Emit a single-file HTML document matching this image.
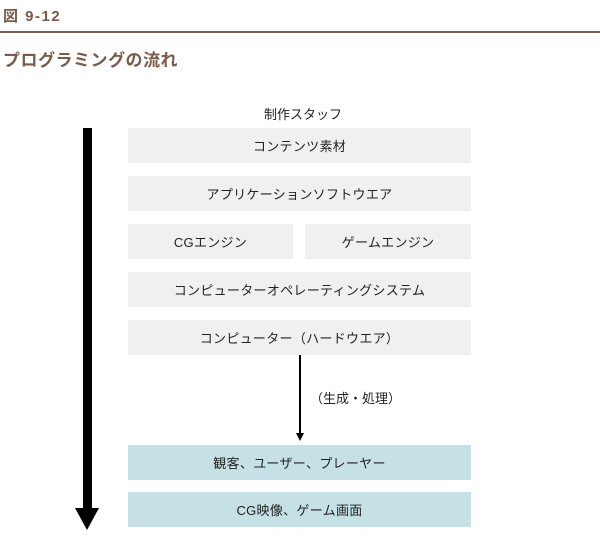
<!DOCTYPE html>
<html><head><meta charset="utf-8"><style>
body{margin:0;width:600px;height:543px;background:#fff;position:relative;overflow:hidden;font-family:"Liberation Sans","Noto Sans CJK JP",sans-serif;color:#222}
.a{position:absolute}
.b{position:absolute;background:#f0f0f0;font-size:13px;display:flex;align-items:center;justify-content:center;height:35px;letter-spacing:0.3px}
.c{background:#c5e1e6}
</style></head><body>
<div class="a" style="left:3px;top:5px;font-size:15px;color:#7a5a48;font-weight:bold;letter-spacing:1.5px">図 9-12</div>
<div class="a" style="left:0;top:31px;width:600px;height:2px;background:#7d5e4c"></div>
<div class="a" style="left:3px;top:46px;font-size:17px;color:#7a5a48;font-weight:bold;letter-spacing:0.5px">プログラミングの流れ</div>
<div class="a" style="left:264px;top:104px;font-size:13px">制作スタッフ</div>
<div class="b" style="left:128px;top:128px;width:343px">コンテンツ素材</div>
<div class="b" style="left:128px;top:176px;width:343px">アプリケーションソフトウエア</div>
<div class="b" style="left:128px;top:224px;width:165px">CGエンジン</div>
<div class="b" style="left:305px;top:224px;width:166px">ゲームエンジン</div>
<div class="b" style="left:128px;top:272px;width:343px">コンピューターオペレーティングシステム</div>
<div class="b" style="left:128px;top:320px;width:343px">コンピューター（ハードウエア）</div>
<div class="a" style="left:299px;top:355px;width:1.5px;height:80px;background:#000"></div>
<div class="a" style="left:296px;top:433px;width:0;height:0;border-left:4px solid transparent;border-right:4px solid transparent;border-top:8px solid #000"></div>
<div class="a" style="left:310px;top:388px;font-size:13px">（生成・処理）</div>
<div class="b c" style="left:128px;top:445px;width:343px">観客、ユーザー、プレーヤー</div>
<div class="b c" style="left:128px;top:492px;width:343px">CG映像、ゲーム画面</div>
<div class="a" style="left:83px;top:128px;width:9px;height:382px;background:#000"></div>
<div class="a" style="left:75px;top:508px;width:0;height:0;border-left:12.5px solid transparent;border-right:12.5px solid transparent;border-top:22px solid #000"></div>
</body></html>
